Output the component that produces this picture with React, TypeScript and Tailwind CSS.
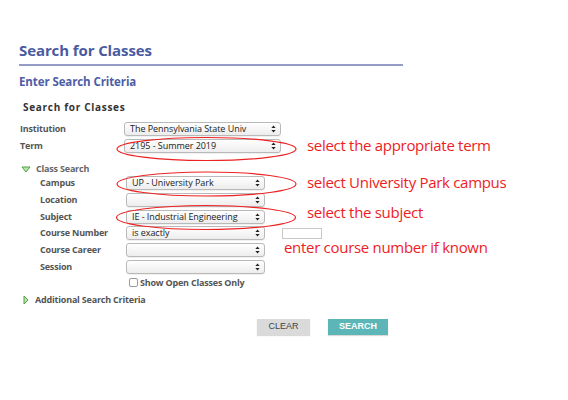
import React from "react";

const Arrows = () => (
  <svg width="5" height="8" viewBox="0 0 5 8" className="shrink-0">
    <path d="M2.5 0.5 L4.6 3 L0.4 3 Z" fill="#222" />
    <path d="M2.5 7.5 L4.6 5 L0.4 5 Z" fill="#222" />
  </svg>
);

const Select = ({ value = "", w }: { value?: string; w: string }) => (
  <div
    className={`${w} h-[14px] rounded-[3px] border border-[#b9b9b9] bg-gradient-to-b from-white to-[#ededed] flex items-center justify-between pl-[5px] pr-[4px] text-[9px] leading-[12px] text-[#1a1a1a] tracking-[-0.05px] shadow-[0_1px_0_rgba(0,0,0,0.06)]`}
  >
    <span className="whitespace-nowrap">{value}</span>
    <Arrows />
  </div>
);

const Label = ({ children, w }: { children: React.ReactNode; w: string }) => (
  <div className={`${w} shrink-0 text-[9px] font-bold text-[#555] leading-[12px] tracking-[-0.2px]`}>{children}</div>
);

export default function App() {
  return (
    <div
      className="relative w-[568px] h-[400px] bg-white overflow-hidden"
      style={{ fontFamily: '"Open Sans", "DejaVu Sans", sans-serif' }}
    >
      <div className="pl-[19px] pt-[40px]">
        <div className="w-[384px] border-b-2 border-[#959cc9] pb-[4px]">
          <h1 className="text-[15px] font-bold leading-[20px] text-[#4a5a9f] tracking-[-0.1px]">Search for Classes</h1>
        </div>
        <h2 className="mt-[8px] text-[11.5px] font-bold leading-[16px] text-[#4d5da6] tracking-[-0.1px]">
          Enter Search Criteria
        </h2>
        <h3 className="mt-[10px] ml-[4px] text-[10px] font-bold leading-[14px] text-[#333] tracking-[0.7px]">
          Search for Classes
        </h3>

        <div className="mt-[8px] flex flex-col gap-[3px]">
          <div className="flex items-center h-[14px]">
            <Label w="w-[105px] pl-[1px]">Institution</Label>
            <Select w="w-[157px]" value="The Pennsylvania State Univ" />
          </div>
          <div className="flex items-center h-[14px]">
            <Label w="w-[105px] pl-[1px]">Term</Label>
            <Select w="w-[157px]" value="2195 - Summer 2019" />
          </div>
        </div>

        <div className="mt-[10px] flex items-center gap-[5px] ml-[2px] h-[12px]">
          <svg width="10" height="7" viewBox="0 0 10 7">
            <path d="M1 1 L9 1 L5 6 Z" fill="#b9e6a9" stroke="#52a046" strokeWidth="1" strokeLinejoin="round" />
          </svg>
          <span className="text-[9px] font-bold text-[#666] leading-[12px] tracking-[-0.2px]">Class Search</span>
        </div>

        <div className="ml-[21px] mt-[1px] flex flex-col gap-[2.8px]">
          {[
            ["Campus", "UP - University Park"],
            ["Location", ""],
            ["Subject", "IE - Industrial Engineering"],
            ["Course Number", "is exactly"],
            ["Course Career", ""],
            ["Session", ""],
          ].map(([l, v]) => (
            <div key={l} className="flex items-center h-[14px]">
              <Label w="w-[86px]">{l}</Label>
              <Select w="w-[139px]" value={v} />
              {l === "Course Number" && (
                <div className="ml-[17px] w-[40px] h-[11px] border border-[#c8c8c8] bg-white" />
              )}
            </div>
          ))}
          <div className="flex items-center h-[10px] pl-[89px] gap-[2px] mt-[1px]">
            <div className="w-[9px] h-[9px] rounded-[2px] border border-[#9a9a9a] bg-white" />
            <span className="text-[9px] font-bold text-[#555] leading-[12px] tracking-[-0.2px]">Show Open Classes Only</span>
          </div>
        </div>

        <div className="mt-[6px] flex items-center gap-[6px] ml-[4px] h-[12px]">
          <svg width="6" height="10" viewBox="0 0 6 10">
            <path d="M1 1 L5 5 L1 9 Z" fill="#b9e6a9" stroke="#52a046" strokeWidth="1" strokeLinejoin="round" />
          </svg>
          <span className="text-[9px] font-bold text-[#555] leading-[12px] tracking-[-0.2px]">Additional Search Criteria</span>
        </div>

        <div className="mt-[13px] flex pl-[238px] gap-[18px]">
          <div
            className="w-[53px] h-[16px] bg-[#dadada] flex items-center justify-center text-[9px] text-[#444] shadow-[0_1px_1px_rgba(0,0,0,0.15)]"
            style={{ fontFamily: '"Liberation Sans", Arial, sans-serif' }}
          >
            CLEAR
          </div>
          <div
            className="w-[60px] h-[16px] bg-[#5cb6b8] flex items-center justify-center text-[9px] font-bold text-white shadow-[0_1px_1px_rgba(0,0,0,0.15)]"
            style={{ fontFamily: '"Liberation Sans", Arial, sans-serif' }}
          >
            SEARCH
          </div>
        </div>
      </div>

      {/* annotation overlay */}
      <svg className="absolute left-0 top-0 pointer-events-none" width="568" height="400">
        <ellipse cx="206.5" cy="149" rx="89.5" ry="11.5" fill="none" stroke="#ee2222" strokeWidth="1.2" />
        <ellipse cx="206.5" cy="184" rx="89.5" ry="12" fill="none" stroke="#ee2222" strokeWidth="1.2" />
        <ellipse cx="206" cy="217.5" rx="89.5" ry="12" fill="none" stroke="#ee2222" strokeWidth="1.2" />
      </svg>
      <div
        className="absolute inset-0 pointer-events-none text-[15px] text-[#ee1c24] leading-none tracking-[-0.3px]"
        style={{ fontFamily: '"Open Sans", "Noto Sans", sans-serif' }}
      >
        <div className="absolute left-[307px] top-[138px]">select the appropriate term</div>
        <div className="absolute left-[307px] top-[175px]">select University Park campus</div>
        <div className="absolute left-[307px] top-[205px]">select the subject</div>
        <div className="absolute left-[284px] top-[240px]">enter course number if known</div>
      </div>
    </div>
  );
}
